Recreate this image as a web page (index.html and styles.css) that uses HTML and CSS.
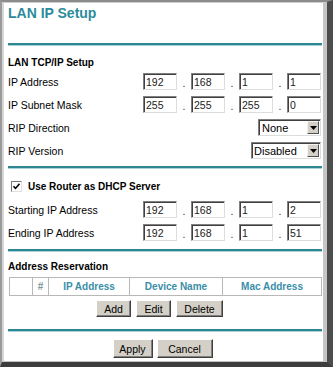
FILE: index.html
```html
<!DOCTYPE html>
<html lang="en">
  <head>
    <meta charset="UTF-8" />
    <title>LAN IP Setup</title>
    <link rel="stylesheet" href="styles.css">
  </head>
  <body>
    <div class="window">
      <div class="content">
        <h1 class="title">LAN IP Setup</h1>
        <div class="rule"></div>

        <section class="block tcp">
          <h2 class="heading">LAN TCP/IP Setup</h2>
          <div class="row">
            <span class="label">IP Address</span>
            <div class="ip">
              <input class="field" type="text" value="192"><span class="dot">.</span>
              <input class="field" type="text" value="168"><span class="dot">.</span>
              <input class="field" type="text" value="1"><span class="dot">.</span>
              <input class="field" type="text" value="1">
            </div>
          </div>
          <div class="row">
            <span class="label">IP Subnet Mask</span>
            <div class="ip">
              <input class="field" type="text" value="255"><span class="dot">.</span>
              <input class="field" type="text" value="255"><span class="dot">.</span>
              <input class="field" type="text" value="255"><span class="dot">.</span>
              <input class="field" type="text" value="0">
            </div>
          </div>
          <div class="row">
            <span class="label">RIP Direction</span>
            <div class="select select-direction">
              <span class="select-text">None</span>
              <span class="select-arrow">
                <svg width="7" height="4" viewBox="0 0 7 4"><path d="M0 0h7L3.5 4z" fill="#000"/></svg>
              </span>
            </div>
          </div>
          <div class="row">
            <span class="label">RIP Version</span>
            <div class="select select-version">
              <span class="select-text">Disabled</span>
              <span class="select-arrow">
                <svg width="7" height="4" viewBox="0 0 7 4"><path d="M0 0h7L3.5 4z" fill="#000"/></svg>
              </span>
            </div>
          </div>
        </section>
        <div class="rule"></div>

        <section class="block dhcp">
          <label class="check-row">
            <span class="checkbox">
              <svg width="9" height="9" viewBox="0 0 9 9"><path d="M1.5 4.2l2 2.2 4-4.6" fill="none" stroke="#000" stroke-width="1.6"/></svg>
            </span>
            <span class="check-label">Use Router as DHCP Server</span>
          </label>
          <div class="row">
            <span class="label">Starting IP Address</span>
            <div class="ip">
              <input class="field" type="text" value="192"><span class="dot">.</span>
              <input class="field" type="text" value="168"><span class="dot">.</span>
              <input class="field" type="text" value="1"><span class="dot">.</span>
              <input class="field" type="text" value="2">
            </div>
          </div>
          <div class="row">
            <span class="label">Ending IP Address</span>
            <div class="ip">
              <input class="field" type="text" value="192"><span class="dot">.</span>
              <input class="field" type="text" value="168"><span class="dot">.</span>
              <input class="field" type="text" value="1"><span class="dot">.</span>
              <input class="field" type="text" value="51">
            </div>
          </div>
        </section>
        <div class="rule"></div>

        <section class="block resv">
          <h2 class="heading heading-resv">Address Reservation</h2>
          <table class="resv-table">
            <thead>
              <tr>
                <th class="col-sel"></th>
                <th class="col-num">#</th>
                <th class="col-ip">IP Address</th>
                <th class="col-name">Device Name</th>
                <th class="col-mac">Mac Address</th>
              </tr>
            </thead>
          </table>
          <div class="btn-row">
            <button class="btn btn-add">Add</button>
            <button class="btn btn-edit">Edit</button>
            <button class="btn btn-delete">Delete</button>
          </div>
        </section>
        <div class="rule"></div>

        <div class="actions">
          <button class="btn btn-apply">Apply</button>
          <button class="btn btn-cancel">Cancel</button>
        </div>
      </div>
    </div>
  </body>
</html>
```

FILE: styles.css
```css
* {
  margin: 0;
  padding: 0;
  box-sizing: border-box;
}

body {
  font-family: "Liberation Sans", Arial, sans-serif;
  font-size: 10.5px;
  color: #000;
  background-color: #fff;
}

.window {
  height: 367px;
  border-style: solid;
  border-width: 2px 6px 5px 2px;
  border-color: #8c8c8c #4d4d4d #3d3d3d #9a9a9a;
}

.content {
  height: 100%;
  border-style: solid;
  border-width: 1px 4px 1px 2px;
  border-color: #cfcfcf #c6c6c6 #c2c2c2 #d6d6d6;
  padding: 0 1px 0 4px;
}

.title {
  height: 40px;
  padding-top: 2px;
  font-size: 14px;
  line-height: 16px;
  font-weight: bold;
  color: #2c8c9c;
}

.rule {
  border-top: 2px solid #2e8790;
  border-bottom: 1px solid #a6d3d7;
}

.heading {
  padding-top: 10px;
  font-size: 10px;
  line-height: 14px;
  font-weight: bold;
}

.tcp {
  padding-bottom: 4px;
}

.dhcp {
  padding-bottom: 5px;
}

.resv {
  padding-bottom: 12px;
}

.heading-resv {
  padding-top: 8px;
}

.row {
  display: flex;
  align-items: center;
  justify-content: space-between;
  height: 23px;
  padding-right: 1px;
}

.label {
  white-space: nowrap;
}

.ip {
  display: flex;
  align-items: center;
}

.field {
  width: 34px;
  height: 17px;
  padding: 0 0 0 2px;
  font-family: "Liberation Sans", Arial, sans-serif;
  font-size: 10.5px;
  color: #222;
  background-color: #fff;
  border: 1px solid;
  border-color: #808080 #dcdcdc #dcdcdc #808080;
  box-shadow: inset 1px 1px 0 #404040;
  outline: none;
}

.dot {
  width: 14px;
  height: 17px;
  text-align: center;
  line-height: 21px;
  color: #333;
}

.select {
  display: flex;
  align-items: center;
  height: 17px;
  background-color: #fff;
  border: 1px solid;
  border-color: #808080 #dcdcdc #dcdcdc #808080;
  box-shadow: inset 1px 1px 0 #404040;
}

.select-direction {
  width: 63px;
}

.select-version {
  width: 70px;
}

.select-text {
  flex: 1;
  padding-left: 3px;
  font-size: 11px;
}

.select-version .select-text {
  padding-left: 2px;
}

.select-arrow {
  display: flex;
  align-items: center;
  justify-content: center;
  width: 12px;
  height: 13px;
  margin-right: 1px;
  background-color: #d4d0c8;
  border: 1px solid;
  border-color: #f4f4f4 #505050 #505050 #f4f4f4;
}

.check-row {
  display: flex;
  align-items: center;
  gap: 6px;
  height: 23px;
  margin-top: 6px;
  padding-left: 3px;
}

.checkbox {
  display: flex;
  align-items: center;
  justify-content: center;
  width: 11px;
  height: 11px;
  background-color: #fff;
  border: 1px solid;
  border-color: #7a7a7a #e0e0e0 #e0e0e0 #7a7a7a;
}

.check-label {
  font-size: 10px;
  font-weight: bold;
}

.resv-table {
  width: 313px;
  margin: 3px 0 0 1px;
  border-collapse: collapse;
  border: 1px solid #a8a8a8;
}

.resv-table th {
  height: 18px;
  border: 1px solid #b8b8b8;
  font-size: 10px;
  font-weight: bold;
  color: #3a8ea8;
  text-align: center;
}

.resv-table .col-sel {
  width: 23px;
}

.resv-table .col-num {
  width: 16px;
  color: #7d9a9e;
}

.resv-table .col-ip {
  width: 81px;
}

.resv-table .col-name {
  width: 93px;
}

.btn-row {
  display: flex;
  justify-content: center;
  gap: 5px;
  margin-top: 4px;
  padding-right: 11px;
}

.btn {
  height: 17px;
  font-family: "Liberation Sans", Arial, sans-serif;
  font-size: 10.5px;
  color: #000;
  background-color: #d4d0c8;
  border: 1px solid;
  border-color: #fff #404040 #404040 #fff;
  box-shadow: inset -1px -1px 0 #808080;
}

.btn-add {
  width: 35px;
}

.btn-edit {
  width: 35px;
}

.btn-delete {
  width: 47px;
}

.actions {
  display: flex;
  justify-content: center;
  gap: 4px;
  margin-top: 7px;
  padding-right: 5px;
}

.actions .btn {
  height: 19px;
}

.btn-apply {
  width: 40px;
}

.btn-cancel {
  width: 56px;
}
```
